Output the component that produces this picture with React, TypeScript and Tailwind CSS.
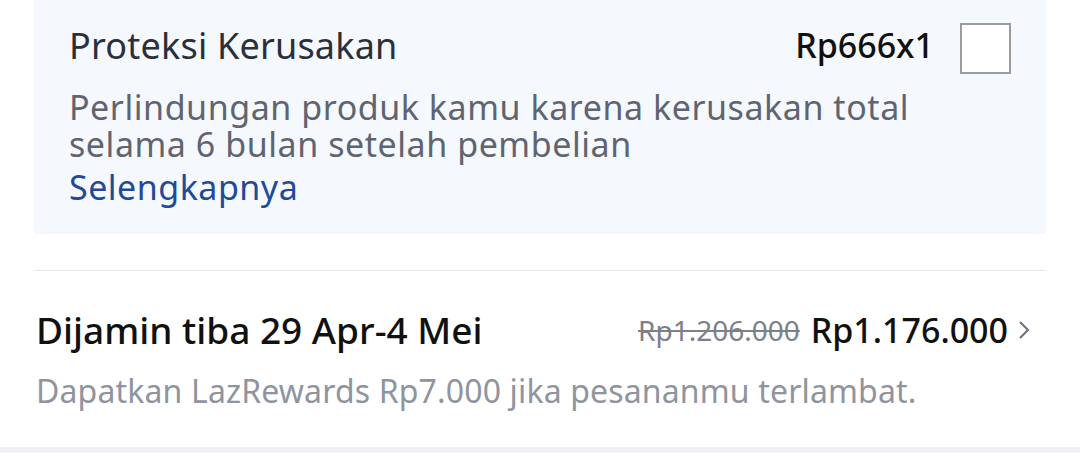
import React, { useState } from "react";

const App: React.FC = () => {
  const [checked, setChecked] = useState(false);

  return (
    <div
      className="w-[1080px] h-[470px] bg-white overflow-hidden"
      style={{ fontFamily: '"Noto Sans", "Open Sans", sans-serif' }}
    >
      {/* protection add-on */}
      <div className="mx-[34px] bg-[#f5f8fd] h-[234px] pl-[35px] pr-[35px] pt-[23px]">
        <div className="flex items-start justify-between">
          <div className="mt-[1px] text-[36px] leading-[44px] tracking-[0.2px] text-[#2b2f3a]">
            Proteksi Kerusakan
          </div>
          <div className="flex items-start gap-[26px]">
            <span className="text-[34px] leading-[44px] font-medium text-[#111]">Rp666x1</span>
            <button
              onClick={() => setChecked(!checked)}
              className="w-[51px] h-[51px] bg-white border-2 border-[#9b9b9b]"
            >
              {checked ? "✓" : ""}
            </button>
          </div>
        </div>
        <p className="mt-[15px] text-[34px] leading-[37px] tracking-[0.55px] text-[#5f6470]">
          Perlindungan produk kamu karena kerusakan total
          <br />
          selama 6 bulan setelah pembelian
        </p>
        <a className="block mt-[6px] text-[34px] leading-[37px] tracking-[0.5px] text-[#1f4a9a]">
          Selengkapnya
        </a>
      </div>

      <div className="mx-[34px] mt-[36px] h-px bg-[#e6e8ec]" />

      {/* delivery guarantee */}
      <div className="px-[36px] pt-[37px]">
        <div className="flex items-center justify-between">
          <span className="text-[37px] leading-[44px] font-medium text-[#111]">
            Dijamin tiba 29 Apr-4 Mei
          </span>
          <div className="flex items-center mr-[13px]">
            <span className="text-[28px] text-[#7b808a] line-through">Rp1.206.000</span>
            <span className="ml-[11px] text-[34px] leading-[44px] font-medium text-[#111]">
              Rp1.176.000
            </span>
            <svg width="14" height="22" viewBox="0 0 14 22" className="ml-[9px]">
              <path d="M3 3l8 8-8 8" fill="none" stroke="#6b6f78" strokeWidth="2" />
            </svg>
          </div>
        </div>
        <p className="mt-[19px] text-[32px] leading-[40px] tracking-[0.15px] text-[#8f949e]">
          Dapatkan LazRewards Rp7.000 jika pesananmu terlambat.
        </p>
      </div>
      <div className="mt-[36px] h-[6px] bg-[#eef0f4]" />
    </div>
  );
};

export default App;
